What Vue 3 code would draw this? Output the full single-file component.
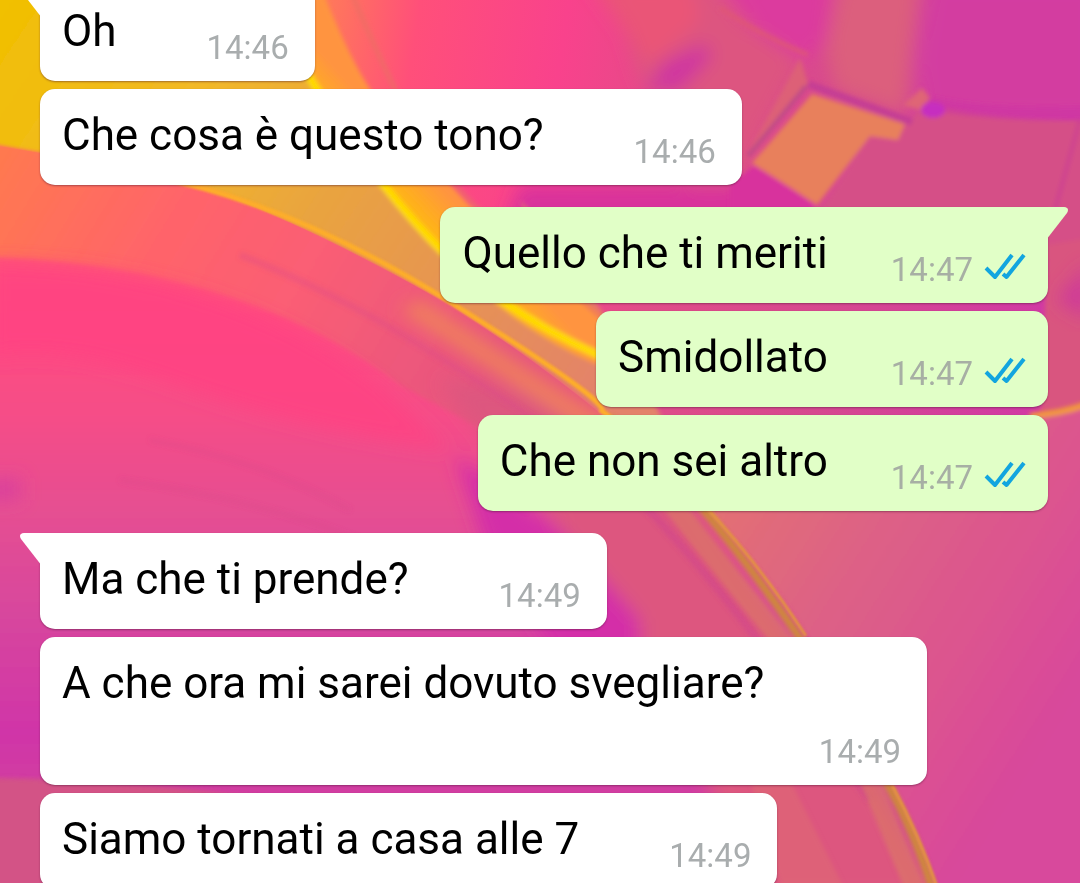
<script setup>
const messages = [
  { id: 1, text: 'Oh', time: '14:46', sent: false, first: true },
  { id: 2, text: 'Che cosa è questo tono?', time: '14:46', sent: false, first: false },
  { id: 3, text: 'Quello che ti meriti', time: '14:47', sent: true, first: true },
  { id: 4, text: 'Smidollato', time: '14:47', sent: true, first: false },
  { id: 5, text: 'Che non sei altro', time: '14:47', sent: true, first: false },
  { id: 6, text: 'Ma che ti prende?', time: '14:49', sent: false, first: true },
  { id: 7, text: 'A che ora mi sarei dovuto svegliare?', time: '14:49', sent: false, first: false },
  { id: 8, text: 'Siamo tornati a casa alle 7', time: '14:49', sent: false, first: false }
]
</script>

<template>
  <main class="chat">
    <svg class="wallpaper" viewBox="0 0 1080 883" preserveAspectRatio="none" aria-hidden="true">
      <defs>
        <linearGradient id="left" x1="0" y1="200" x2="0" y2="883" gradientUnits="userSpaceOnUse">
          <stop offset="0" stop-color="#ff6068" />
          <stop offset=".18" stop-color="#ff4b80" />
          <stop offset=".32" stop-color="#f54e88" />
          <stop offset=".46" stop-color="#e54f92" />
          <stop offset=".6" stop-color="#d8479d" />
          <stop offset=".78" stop-color="#d035a8" />
          <stop offset="1" stop-color="#d24c96" />
        </linearGradient>
        <linearGradient id="right" x1="640" y1="420" x2="1080" y2="700" gradientUnits="userSpaceOnUse">
          <stop offset="0" stop-color="#e5786a" />
          <stop offset=".25" stop-color="#e26e76" />
          <stop offset=".5" stop-color="#dd6186" />
          <stop offset=".75" stop-color="#dc548f" />
          <stop offset="1" stop-color="#d8489c" />
        </linearGradient>
        <linearGradient id="gold" x1="0" y1="0" x2="600" y2="400" gradientUnits="userSpaceOnUse">
          <stop offset="0" stop-color="#f1c000" />
          <stop offset=".3" stop-color="#f2b827" />
          <stop offset=".52" stop-color="#e9a43f" />
          <stop offset="1" stop-color="#e3826a" />
        </linearGradient>
        <linearGradient id="coral" x1="0" y1="140" x2="460" y2="420" gradientUnits="userSpaceOnUse">
          <stop offset="0" stop-color="#ff7a4e" />
          <stop offset=".35" stop-color="#ff646a" />
          <stop offset=".6" stop-color="#fb5e74" />
          <stop offset="1" stop-color="#e6557f" />
        </linearGradient>
        <linearGradient id="rose" x1="320" y1="0" x2="1080" y2="120" gradientUnits="userSpaceOnUse">
          <stop offset="0" stop-color="#ff7c58" />
          <stop offset=".13" stop-color="#ff4f7a" />
          <stop offset=".32" stop-color="#f9428c" />
          <stop offset=".48" stop-color="#e04c88" />
          <stop offset=".72" stop-color="#d6488f" />
          <stop offset="1" stop-color="#d139a4" />
        </linearGradient>
        <linearGradient id="ribbon" x1="400" y1="250" x2="455" y2="200" gradientUnits="userSpaceOnUse">
          <stop offset="0" stop-color="#ffe000" />
          <stop offset=".35" stop-color="#ffbd0c" />
          <stop offset="1" stop-color="#ff9440" />
        </linearGradient>
        <clipPath id="leftArea">
          <path d="M-10 145Q90 160 180 182T450 305Q590 395 685 490T805 635L890 785 940 900H-10Z" />
        </clipPath>
        <filter id="soft" x="-10%" y="-10%" width="120%" height="120%"><feGaussianBlur stdDeviation="2" /></filter>
        <filter id="fine" x="-10%" y="-10%" width="120%" height="120%"><feGaussianBlur stdDeviation="1" /></filter>
        <filter id="haze" x="-20%" y="-20%" width="140%" height="140%"><feGaussianBlur stdDeviation="9" /></filter>
      </defs>

      <rect width="1080" height="883" fill="url(#rose)" />

      <g filter="url(#haze)">
        <path d="M610 -20H710L740 20 800 60 730 190H690L640 75Z" fill="#dd5580" />
        <path d="M590 -20H690L700 20 650 65Z" fill="#ea5577" />
        <path d="M716 -20H835L826 40 806 62 760 34Z" fill="#dc3b9e" />
        <path d="M840 -20H920L905 115 835 90 826 50Z" fill="#dc5f7d" />
        <path d="M520 185H800V240H500Z" fill="#d9319b" />
        <path d="M930 -20H1100V120H925L915 60Z" fill="#d33ca0" />
        <path d="M645 92L664 62 705 44 712 56 680 90Z" fill="#cf34a0" />
      </g>
      <g filter="url(#soft)">
        <path d="M925 103Q1000 122 1090 120V260H790L870 134 900 132Z" fill="#d55087" />
        <path d="M915 108Q1000 124 1090 120V106Q990 110 930 96Z" fill="#cc32a6" opacity=".5" />
        <path d="M744 160L800 58 808 84 748 156Z" fill="#dd6077" />
        <path d="M730 185L754 166 815 205 800 225H730Z" fill="#d8309d" />
        <path d="M748 156L806 86" fill="none" stroke="#bd4a88" stroke-width="4" />
        <path d="M812 94L905 124 898 140 870 136 817 205 752 163Z" fill="#e8805c" />
        <path d="M808 84L912 122" fill="none" stroke="#c43e94" stroke-width="7" />
        <path d="M720 8Q760 35 808 55" fill="none" stroke="#df5676" stroke-width="4" />
        <path d="M903 105L922 88 930 98 920 110Z" fill="#df6576" />
        <ellipse cx="933" cy="110" rx="12" ry="8" fill="#c62fc0" />
        <path d="M1080 120Q1066 170 1055 210" fill="none" stroke="#cf448f" stroke-width="5" />
        <path d="M1048 245Q1075 240 1090 238V420H1040Z" fill="#d9557f" />
      </g>
      <path d="M1056 300L1090 262V320Z" fill="#cf3b98" filter="url(#haze)" />

      <g filter="url(#soft)">
        <path d="M520 200Q590 280 640 380L720 540 810 640 890 785 940 900H1100V405Q1020 425 940 420L620 420Z" fill="url(#right)" />
        <path d="M1030 416Q1065 413 1090 403" fill="none" stroke="#f39a3a" stroke-width="6" />
        <path d="M-10 -10H318Q355 100 450 205T620 340L720 525H600L420 320 170 180 -10 145Z" fill="url(#gold)" />
        <path d="M312 -10H322Q350 60 372 92T470 206L615 325V372Q490 325 380 186Q340 130 300 70Z" fill="url(#ribbon)" />
        <path d="M350 -10Q380 60 405 110T475 206L610 325" fill="none" stroke="#e86f62" stroke-width="5" opacity=".6" />
        <path d="M305 70Q365 170 430 239T600 356" fill="none" stroke="#ffda00" stroke-width="8" />
      </g>

      <path
        d="M-10 145Q90 160 180 182T450 305Q590 395 685 490T805 635L890 785 940 900H-10Z"
        fill="url(#left)"
        filter="url(#soft)"
      />
      <g clip-path="url(#leftArea)">
        <path d="M-10 130L180 160 450 280 640 420 560 470 400 385Q240 265 -10 257Z" fill="url(#coral)" filter="url(#soft)" />
        <g filter="url(#haze)">
          <path d="M-10 262Q220 265 380 385L450 450Q300 430 180 386T-10 358Z" fill="#ff4283" opacity=".8" />
          <path d="M440 380L560 400 700 500 860 755 940 900H765L640 650 560 530Z" fill="#dd567f" />
          <path d="M455 455L520 500 560 530 640 620V660H560L490 560Z" fill="#d42ea8" />
          <path d="M-20 482L20 478V500H-20Z" fill="#d93f9c" />
          <path d="M420 300L620 430 600 440 400 310Z" fill="#f0805c" />
        </g>
        <g filter="url(#soft)" fill="none">
          <path d="M240 255Q330 290 420 345T620 480" stroke="#d9488a" stroke-width="7" opacity=".3" />
          <path d="M620 480Q700 560 780 670L870 800" stroke="#cf438f" stroke-width="8" opacity=".5" />
          <path d="M150 440Q260 460 350 510M120 480Q260 500 360 540" stroke="#d74487" stroke-width="5" opacity=".25" />
        </g>
        <g filter="url(#soft)">
          <path d="M-10 778Q160 780 350 810L500 900H-10Z" fill="#d35286" />
          <path d="M750 780H790L850 900H785Z" fill="#de6675" opacity=".7" />
        </g>
      </g>
      <g filter="url(#soft)" fill="none">
        <path d="M600 425Q640 460 676 508T786 645L872 785 920 900" stroke="#dc7c63" stroke-width="20" opacity=".6" />
        <path d="M610 418Q660 460 700 506T800 638L888 785Q918 840 936 900" stroke="#ce873d" stroke-width="8" />
      </g>
      <g filter="url(#fine)" fill="none">
        <path d="M150 176Q290 202 450 302T602 411L640 440" stroke="#fdad2a" stroke-width="5" />
        <path d="M704 505Q760 565 806 636M892 785Q920 837 938 890" stroke="#e3953f" stroke-width="3" />
      </g>
    </svg>

    <ol class="messages">
      <li
        v-for="message in messages"
        :key="message.id"
        class="message"
        :class="{ sent: message.sent, first: message.first }"
      >
        <svg v-if="message.first" class="tail" viewBox="0 0 22 32" aria-hidden="true">
          <path d="M22 0H4C0 0-1 3 1 6L20 30.500L22 32Z" />
        </svg>
        <p class="text">{{ message.text }}</p>
        <span class="meta">
          <time>{{ message.time }}</time>
          <svg v-if="message.sent" class="ticks" viewBox="0 0 42 28" role="img" aria-label="Letto">
            <path d="M2 15L11 24L28 2M19 21L22.500 24L40 2" />
          </svg>
        </span>
      </li>
    </ol>
  </main>
</template>

<style>
body {
  margin: 0;
}
</style>

<style scoped>
.chat {
  position: relative;
  height: 100vh;
  overflow: hidden;
  background: #e0508c;
  font-family: Roboto, "Liberation Sans", sans-serif;
}

.wallpaper {
  position: absolute;
  inset: 0;
  width: 100%;
  height: 100%;
}

.messages {
  position: relative;
  display: flex;
  flex-direction: column;
  gap: 8px;
  margin: -29px 0 0;
  padding: 0 32px 0 40px;
  list-style: none;
}

.message {
  position: relative;
  display: flex;
  flex-wrap: wrap;
  align-items: flex-end;
  align-self: flex-start;
  box-sizing: border-box;
  max-width: 88%;
  padding: 20px 26px 7px 22px;
  border-radius: 15px;
  background: #fff;
  box-shadow: 0 1px 2px rgba(70, 20, 50, 0.45);
}

.message.first {
  margin-top: 14px;
  border-top-left-radius: 0;
}

.message.sent {
  align-self: flex-end;
  padding-right: 22px;
  background: #e1ffc7;
}

.message.sent.first {
  border-top-left-radius: 15px;
  border-top-right-radius: 0;
}

.text {
  margin: 0 90px 17px 0;
  color: #000;
  font-size: 44px;
  line-height: 52px;
}

.sent .text {
  margin-right: 63px;
}

.meta {
  display: flex;
  align-items: center;
  gap: 11px;
  height: 52px;
  margin-left: auto;
  color: #a9adae;
  font-size: 33px;
  line-height: 52px;
}

.sent .meta {
  color: #a7afa4;
}

.ticks {
  width: 42px;
  height: 28px;
  margin-bottom: 6px;
  fill: none;
  stroke: #12a5df;
  stroke-width: 4;
  stroke-linejoin: round;
}

.tail {
  position: absolute;
  top: 0;
  left: -20px;
  width: 22px;
  height: 32px;
  fill: #fff;
}

.sent .tail {
  right: -20px;
  left: auto;
  fill: #e1ffc7;
  transform: scaleX(-1);
}
</style>
